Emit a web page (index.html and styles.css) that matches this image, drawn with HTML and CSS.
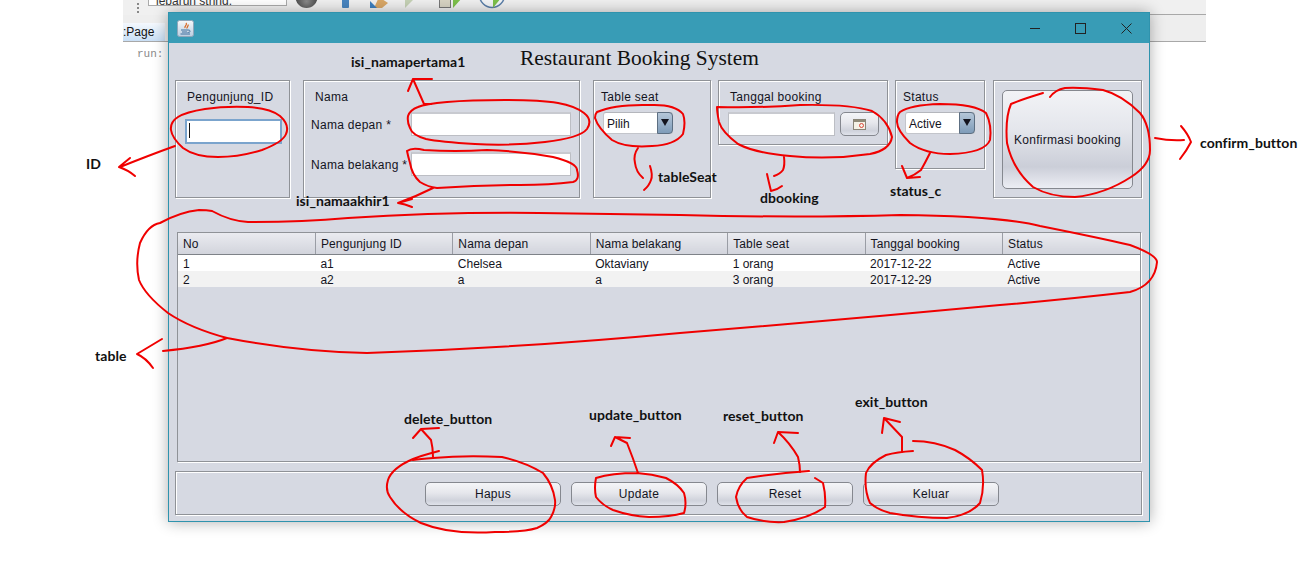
FILE: index.html
```html
<!DOCTYPE html>
<html lang="id">
<head>
<meta charset="utf-8">
<title>Restaurant Booking System</title>
<link rel="stylesheet" href="styles.css">
</head>
<body>
<section class="ide">
  <div class="ide-toolbar">
    <span class="grip"></span>
    <span class="ide-combo">lebarun string.</span>
    <svg class="ide-icons" width="230" height="14" viewBox="0 0 230 14">
      <defs>
        <radialGradient id="ball" cx="0.5" cy="0.7" r="0.6">
          <stop offset="0" stop-color="#8a8a8a"/>
          <stop offset="1" stop-color="#3f3f3f"/>
        </radialGradient>
      </defs>
      <circle cx="28.5" cy="-3" r="11" fill="url(#ball)"/>
      <rect x="64" y="-4" width="7" height="12" rx="1" fill="#4a86c0"/>
      <path d="M96 8 L101 -3 L110 3 L104 8 Z" fill="#d9a766"/>
      <path d="M92 1 L92 8 L99 8 Z" fill="#3c7fc0"/>
      <path d="M127 -2 L127 8 L137 -2 Z" fill="#c5d1b5"/>
      <rect x="161.5" y="-3" width="11" height="10.5" fill="#d8d4c4" stroke="#777"/>
      <path d="M175 -2 L175 8 L184 -2 Z" fill="#7cc04a"/>
      <circle cx="214" cy="-5" r="12.5" fill="#f2f4f6" stroke="#5a7ea8" stroke-width="1.5"/>
      <path d="M215 -2 L215 8 L223 -2 Z" fill="#7cc04a"/>
    </svg>
  </div>
  <div class="ide-tabs"><span class="ide-tab">:Page</span></div>
  <div class="ide-output">run:</div>
</section>

<main class="window">
  <header class="titlebar">
    <svg class="java-icon" width="17" height="17" viewBox="0 0 17 17">
      <defs>
        <linearGradient id="javaBg" x1="0" y1="0" x2="0" y2="1">
          <stop offset="0" stop-color="#f6f8fa"/>
          <stop offset="1" stop-color="#b9cde0"/>
        </linearGradient>
      </defs>
      <rect x="0.5" y="0.5" width="16" height="16" rx="2" fill="url(#javaBg)" stroke="#8fa6ba"/>
      <path d="M9 3 C11 5 7 6 8 8 M11 4.5 C12 6 9.5 7 10 8.5" fill="none" stroke="#d8641e" stroke-width="1.2"/>
      <path d="M4 10 H11 M5 12 H10 M3.5 14 H13 M11 10 C14 10 14 12.5 10.5 12.5" fill="none" stroke="#3d6f9e" stroke-width="1"/>
    </svg>
    <div class="win-controls">
      <span class="win-min"></span>
      <span class="win-max"></span>
      <svg class="win-close" width="11" height="11" viewBox="0 0 11 11"><path d="M0.5 0.5 L10.5 10.5 M10.5 0.5 L0.5 10.5" stroke="#222" stroke-width="1" fill="none"/></svg>
    </div>
  </header>

  <div class="content">
    <h1 class="app-title">Restaurant Booking System</h1>

    <div class="form-row">
      <section class="panel panel-id">
        <div class="panel-label">Pengunjung_ID</div>
        <div class="input input-focus"><span class="caret"></span></div>
      </section>

      <section class="panel panel-name">
        <div class="panel-label">Nama</div>
        <div class="name-grid">
          <span class="field-label">Nama depan *</span>
          <div class="input"></div>
          <span class="field-label">Nama belakang *</span>
          <div class="input"></div>
        </div>
      </section>

      <section class="panel panel-seat">
        <div class="panel-label">Table seat</div>
        <div class="combo"><span class="combo-text">Pilih</span><span class="combo-arrow"></span></div>
      </section>

      <section class="panel panel-date">
        <div class="panel-label">Tanggal booking</div>
        <div class="date-row">
          <div class="input"></div>
          <button class="btn btn-cal" type="button">
            <svg width="13" height="11" viewBox="0 0 13 11">
              <rect x="0.5" y="0.5" width="12" height="10" fill="#f4f1e6" stroke="#8a8578"/>
              <rect x="1" y="1" width="11" height="2" fill="#8f8a78"/>
              <circle cx="8.5" cy="6.5" r="2" fill="none" stroke="#d8483c" stroke-width="1"/>
            </svg>
          </button>
        </div>
      </section>

      <section class="panel panel-status">
        <div class="panel-label">Status</div>
        <div class="combo"><span class="combo-text">Active</span><span class="combo-arrow"></span></div>
      </section>

      <section class="panel panel-confirm">
        <button class="btn btn-confirm" type="button">Konfirmasi booking</button>
      </section>
    </div>

    <section class="table-panel">
      <table class="grid">
        <thead>
          <tr><th>No</th><th>Pengunjung ID</th><th>Nama depan</th><th>Nama belakang</th><th>Table seat</th><th>Tanggal booking</th><th>Status</th></tr>
        </thead>
        <tbody>
          <tr><td>1</td><td>a1</td><td>Chelsea</td><td>Oktaviany</td><td>1 orang</td><td>2017-12-22</td><td>Active</td></tr>
          <tr><td>2</td><td>a2</td><td>a</td><td>a</td><td>3 orang</td><td>2017-12-29</td><td>Active</td></tr>
        </tbody>
      </table>
    </section>

    <section class="action-panel">
      <button class="btn btn-action" type="button">Hapus</button>
      <button class="btn btn-action" type="button">Update</button>
      <button class="btn btn-action" type="button">Reset</button>
      <button class="btn btn-action" type="button">Keluar</button>
    </section>
  </div>
</main>

<svg class="ink" width="1312" height="568" viewBox="0 0 1312 568">
  <path d="M205,109 Q225,106 248,107 Q270,108 280,116 Q290,125 286,134 Q283,142 262,150 Q240,157 218,157 Q195,157 183,148 Q172,138 171,130 Q170,122 178,117 Q186,112 205,109"/>
  <path d="M175,146 Q150,155 120,167 M130,158 L119,167 Q128,170 135,176"/>
  <path d="M447,102 Q470,100 505,100 Q540,100 558,103 Q575,106 584,113 Q593,120 587,129 Q580,138 545,142 Q510,146 475,144 Q440,142 426,139 Q412,135 410,128 Q407,122 408,116 Q410,110 418,107 Q425,104 447,102"/>
  <path d="M431,104 L424,104 L413,79 L432,79 M413,79 L408,91"/>
  <path d="M407,151 Q412,147 424,150 Q455,152 487,150 Q520,151 553,157 Q577,163 577,170 Q580,180 573,182 Q550,185 520,185 Q480,185 437,188 Q428,187 420,182 Q412,175 410,163 Q408,156 407,151"/>
  <path d="M433,188 Q415,197 398,203 L412,199 M398,203 Q405,204 412,207"/>
  <path d="M597,112 Q615,104 650,105 Q675,104 683,114 Q686,122 683,134 Q675,145 652,146 Q625,148 612,140 Q598,128 595,118 Q595,114 597,112"/>
  <path d="M638,148 Q633,155 635,163 Q636,172 643,178 M650,166 Q653,175 651,180 Q649,186 644,190"/>
  <path d="M717,107 Q760,108 800,105 Q850,104 872,111 Q888,120 892,137 Q890,150 870,154 Q830,160 790,156 Q755,153 738,144 Q722,132 719,122 Q717,112 717,107"/>
  <path d="M784,157 Q785,165 783,170 Q780,174 774,176 M767,174 Q769,183 771,191 Q777,190 782,186"/>
  <path d="M900,112 Q910,105 940,104 Q975,104 986,113 Q992,125 990,140 Q985,153 950,154 Q925,154 910,143 Q897,130 897,122 Q897,115 900,112"/>
  <path d="M930,153 Q925,163 921,170 Q915,175 907,178 M902,166 L907,178 L920,177"/>
  <path d="M1043,93 Q1020,100 1011,104 Q1005,118 1007,143 Q1013,170 1033,187 Q1050,197 1075,197 Q1105,194 1131,177 Q1150,165 1150,150 Q1150,125 1140,113 Q1122,95 1103,90 Q1080,87 1065,88 Q1055,90 1050,97"/>
  <path d="M1155,138 Q1170,141 1184,140 M1181,126 Q1188,134 1191,142 Q1187,150 1180,159"/>
  <path d="M212,211 Q230,221 248,222 Q300,222 348,218 Q440,212 539,213 Q620,214 680,215 Q800,218 900,215 Q1000,216 1040,226 Q1100,238 1130,245 Q1157,255 1157,262 Q1155,285 1130,292 Q1060,300 1000,305 Q840,320 680,333 Q520,348 367,353 Q300,352 227,338 Q190,328 168,313 Q145,295 139,280 Q135,262 140,243 Q148,225 160,223 Q180,212 199,210 Q207,210 212,211"/>
  <path d="M227,338 Q205,347 163,351 M162,339 L137,354 Q146,358 153,368"/>
  <path d="M439,451 Q420,456 413,459 Q392,468 388,480 Q385,490 390,497 Q400,513 421,523 Q450,535 495,532 Q525,532 537,528 Q548,523 551,517 Q556,508 555,500 Q553,485 543,473 Q525,462 502,457 Q465,455 433,458 Q420,459 413,460"/>
  <path d="M433,457 Q433,448 431,440 L421,429 L413,438 M421,429 L439,428"/>
  <path d="M637,473 Q612,473 596,478 Q594,488 596,497 Q602,505 613,510 Q630,516 649,517 Q670,517 684,513 Q687,503 684,493 Q678,484 666,478 Q652,474 637,473"/>
  <path d="M638,473 Q633,458 627,443 L615,437 L611,446 M615,437 L630,438"/>
  <path d="M809,471 Q778,473 747,478 Q738,486 736,497 Q738,510 747,517 Q765,523 784,522 Q810,518 825,507 Q826,495 823,483 L815,478"/>
  <path d="M800,472 Q800,465 798,457 Q790,443 778,432 L774,443 M778,432 L798,433"/>
  <path d="M913,451 Q897,452 886,455 Q870,463 866,473 Q864,490 870,503 Q878,510 890,513 Q918,518 947,518 Q970,515 980,503 Q985,487 982,470 Q970,458 955,450 Q935,441 913,441"/>
  <path d="M902,452 L902,437 L884,418 L882,433 M884,418 L900,422"/>
</svg>

<span class="note note-first">isi_namapertama1</span>
<span class="note note-id">ID</span>
<span class="note note-last">isi_namaakhir1</span>
<span class="note note-seat">tableSeat</span>
<span class="note note-date">dbooking</span>
<span class="note note-status">status_c</span>
<span class="note note-confirm">confirm_button</span>
<span class="note note-table">table</span>
<span class="note note-delete">delete_button</span>
<span class="note note-update">update_button</span>
<span class="note note-reset">reset_button</span>
<span class="note note-exit">exit_button</span>
</body>
</html>
```

FILE: styles.css
```css
* { box-sizing: border-box; }

html, body {
  margin: 0;
  width: 1312px;
  height: 568px;
  overflow: hidden;
  background: #fff;
}

body {
  position: relative;
  font-family: "Liberation Sans", Arial, sans-serif;
  font-size: 12px;
  letter-spacing: .28px;
  color: #14141e;
}

/* IDE behind the window */
.ide {
  position: absolute;
  left: 123px;
  top: 0;
  width: 1083px;
  height: 70px;
  letter-spacing: 0;
}

.ide-toolbar {
  position: relative;
  height: 15px;
  display: flex;
  align-items: flex-start;
  background: #f0f0f0;
}

.ide-toolbar::after {
  content: "";
  position: absolute;
  right: 0;
  bottom: 0;
  width: 100px;
  height: 1px;
  background: #a8a8a8;
}

.grip {
  width: 2px;
  height: 10px;
  margin: 3px 0 0 14px;
  border-left: 2px dotted #888;
}

.ide-combo {
  width: 139px;
  height: 6px;
  margin-left: 9px;
  padding-left: 7px;
  overflow: hidden;
  background: #fff;
  border: 1px solid #aaa;
  border-top: 0;
  font-size: 12px;
  line-height: 2px;
  color: #333;
}

.ide-icons {
  position: absolute;
  left: 155px;
  top: 0;
}

.ide-tabs {
  height: 27px;
  padding-top: 8px;
  background: #eee;
  border-bottom: 1px solid #a8a8a8;
}

.ide-tab {
  display: block;
  width: 42px;
  height: 18px;
  background: linear-gradient(#f4f8fd, #c9dff5);
  font: 12px/19px "Liberation Sans", Arial, sans-serif;
  color: #111;
}

.ide-output {
  padding: 5px 0 0 14px;
  font: 11px/14px "Liberation Mono", monospace;
  color: #8a8a8a;
}

/* Application window */
.window {
  position: absolute;
  left: 168px;
  top: 12px;
  width: 982px;
  height: 510px;
  background: #d6d9e2;
  border: 1px solid #2f93ad;
  box-shadow: 0 0 14px rgba(0, 0, 0, .32);
}

.titlebar {
  height: 30px;
  display: flex;
  align-items: center;
  justify-content: space-between;
  padding: 0 17px 0 8px;
  background: #389cb6;
}

.java-icon { display: block; }

.win-controls {
  display: flex;
  align-items: center;
}

.win-min {
  width: 10px;
  height: 1px;
  background: #222;
}

.win-max {
  width: 11px;
  height: 11px;
  margin-left: 35px;
  border: 1px solid #222;
}

.win-close {
  display: block;
  margin-left: 35px;
}

.content {
  padding: 0 7px 0 6px;
}

.app-title {
  height: 37px;
  margin: 0;
  padding: 2px 0 0 345px;
  font: 400 21.4px/26px "Liberation Serif", serif;
  letter-spacing: 0;
  color: #111;
}

.form-row {
  height: 118px;
  display: flex;
  align-items: flex-start;
  gap: 7px;
}

.panel {
  height: 118px;
  flex: none;
  border: 1px solid #8f9297;
  box-shadow: 1px 1px 0 #fff, inset 1px 1px 0 #fff;
}

.panel-label {
  height: 31px;
  line-height: 33px;
}

.panel-id { width: 115px; padding: 0 7px 0 9px; margin-right: 6px; }
.panel-id .panel-label { padding-left: 2px; height: 38px; }

.panel-name { width: 277px; padding: 0 8px 0 7px; margin-right: 6px; }
.panel-name .panel-label { padding-left: 4px; }

.name-grid {
  display: grid;
  grid-template-columns: 100px 160px;
  grid-auto-rows: 24px;
  row-gap: 16px;
  align-items: center;
}

.field-label {
  padding-top: 2px;
  white-space: nowrap;
}

.panel-seat { width: 118px; padding: 0 9px; }
.panel-seat .panel-label { margin-left: -2px; }

.panel-date { width: 170px; height: 65px; padding: 0 8px 0 9px; }
.panel-date .panel-label { padding-left: 2px; }

.date-row {
  display: flex;
  gap: 5px;
}
.date-row .input { width: 107px; }

.panel-status { width: 90px; height: 89px; padding: 0 9px; }
.panel-status .panel-label { margin-left: -2px; }

.panel-confirm {
  width: 149px;
  margin-left: 1px;
  padding: 9px 9px 8px 8px;
}

.input {
  position: relative;
  height: 24px;
  background: #fff;
  border: 1px solid #bcbec4;
  border-top: 2px solid #c8cad0;
}

.input-focus {
  width: 97px;
  height: 25px;
  border: 2px solid #7ba4cd;
}

.caret {
  position: absolute;
  left: 2px;
  top: 2px;
  width: 1px;
  height: 15px;
  background: #111;
}

.combo {
  width: 70px;
  height: 22px;
  display: flex;
  align-items: stretch;
  background: #fff;
  border: 1px solid #c3c5cb;
  border-top-color: #b4b6bc;
  border-radius: 3px;
  letter-spacing: 0;
}

.combo-text {
  flex: 1;
  padding-left: 3px;
  line-height: 22px;
}

.combo-arrow {
  position: relative;
  width: 16px;
  margin: -1px -1px -1px 0;
  background: linear-gradient(#b5c6d8, #7f9cb9);
  border: 1px solid #5d6f82;
  border-radius: 0 4px 4px 0;
}

.combo-arrow::after {
  content: "";
  position: absolute;
  left: 3px;
  top: 6px;
  border-left: 4px solid transparent;
  border-right: 4px solid transparent;
  border-top: 7px solid #14141e;
}

.btn {
  display: flex;
  align-items: center;
  justify-content: center;
  padding: 0;
  font: 12px "Liberation Sans", Arial, sans-serif;
  letter-spacing: .28px;
  color: #14141e;
  background: linear-gradient(#f4f5f8 0%, #e6e7ec 45%, #cfd2db 80%, #dfe2ea 100%);
  border: 1px solid #85888f;
  border-radius: 5px;
}

.btn-cal { width: 39px; height: 24px; }

.btn-confirm {
  width: 131px;
  height: 99px;
  background: linear-gradient(#f2f3f6 0%, #e4e6ec 40%, #cbced8 78%, #eceef4 100%);
}

.table-panel {
  height: 230px;
  margin: 34px 1px 0 2px;
  background: #d6d9e2;
  border: 1px solid #8f9297;
  box-shadow: 1px 1px 0 #fff;
}

.grid {
  width: 100%;
  table-layout: fixed;
  border-collapse: collapse;
}

.grid th {
  height: 21px;
  padding: 2px 0 0 5px;
  text-align: left;
  font-weight: 400;
  letter-spacing: .12px;
  background: linear-gradient(#eaebf0, #d2d4dc);
  border-bottom: 1px solid #7e8288;
  border-right: 1px solid #9a9da5;
}

.grid th:last-child { border-right: 0; }

.grid td {
  height: 16px;
  padding: 2px 0 0 5px;
  line-height: 14px;
  letter-spacing: 0;
}

.grid tbody tr:nth-child(odd) { background: #fff; }
.grid tbody tr:nth-child(even) { background: #f2f2f2; }

.action-panel {
  height: 44px;
  margin-top: 9px;
  display: flex;
  align-items: flex-start;
  gap: 10px;
  padding: 10px 0 0 249px;
  border: 1px solid #8f9297;
  box-shadow: 1px 1px 0 #fff, inset 1px 1px 0 #fff;
}

.btn-action {
  width: 136px;
  height: 24px;
}

/* Red pen annotations over the screenshot */
.ink {
  position: absolute;
  left: 0;
  top: 0;
  pointer-events: none;
}

.ink path {
  fill: none;
  stroke: #f00000;
  stroke-width: 2;
  stroke-linecap: round;
  stroke-linejoin: round;
}

.note {
  position: absolute;
  font: 700 14px/18px Lato, sans-serif;
  letter-spacing: .05px;
  color: #111;
  white-space: nowrap;
}

.note-first { left: 351px; top: 53px; }
.note-id { left: 86px; top: 155px; }
.note-last { left: 296px; top: 192px; }
.note-seat { left: 658px; top: 168px; }
.note-date { left: 760px; top: 189px; }
.note-status { left: 890px; top: 182px; }
.note-confirm { left: 1200px; top: 134px; }
.note-table { left: 95px; top: 347px; }
.note-delete { left: 404px; top: 410px; }
.note-update { left: 589px; top: 406px; }
.note-reset { left: 723px; top: 407px; }
.note-exit { left: 855px; top: 393px; }
```
